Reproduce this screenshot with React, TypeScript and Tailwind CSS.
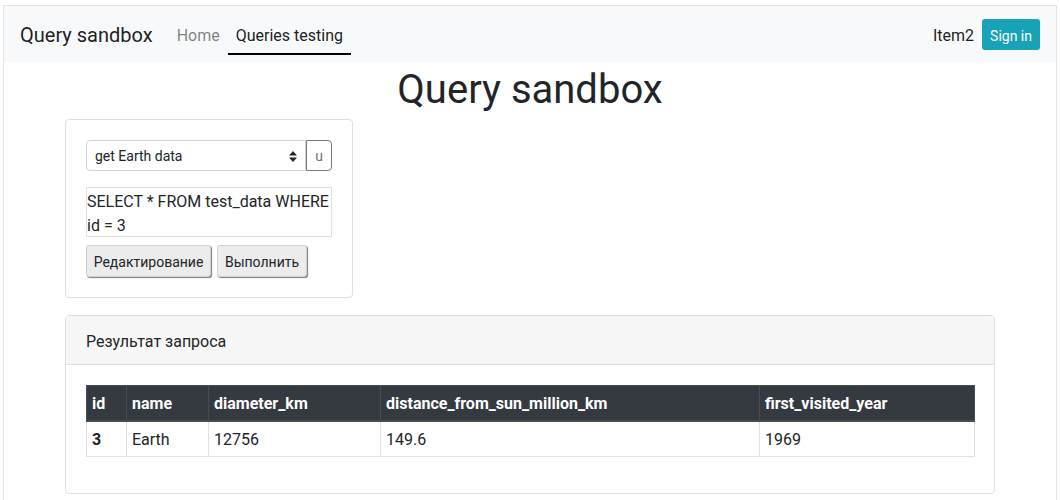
import React from 'react'

const columns = [
  { key: 'id', label: 'id', width: 'w-[40px]' },
  { key: 'name', label: 'name', width: 'w-[82px]' },
  { key: 'diameter_km', label: 'diameter_km', width: 'w-[172px]' },
  { key: 'distance_from_sun_million_km', label: 'distance_from_sun_million_km', width: 'w-[379px]' },
  { key: 'first_visited_year', label: 'first_visited_year', width: 'w-[215px]' },
]

const rows = [
  { id: 3, name: 'Earth', diameter_km: 12756, distance_from_sun_million_km: '149.6', first_visited_year: 1969 },
]

function SortArrows() {
  return (
    <svg width="8" height="11" viewBox="0 0 8 11" fill="#212529">
      <polygon points="4,0 8,4.5 0,4.5" />
      <polygon points="0,6.5 8,6.5 4,11" />
    </svg>
  )
}

export default function App() {
  return (
    <div className="h-[500px] overflow-hidden bg-white font-['Roboto',sans-serif] text-[#212529]">
      <div className="ml-[3px] mt-[5px] h-[495px] w-[1054px] border-x border-t border-[#e3e3e3]">
        {/* Navbar */}
        <header className="flex h-14 items-center justify-between bg-[#f8f9fa] px-4">
          <div className="flex items-center pt-[2px]">
            <span className="mr-4 text-[20px] leading-[30px] text-black/90">Query sandbox</span>
            <nav className="flex items-center">
              <a className="px-2 pb-[6px] pt-2 text-base leading-6 text-black/50">Home</a>
              <a className="border-b-2 border-black px-2 pb-[5px] pt-2 text-base leading-6 text-black/90">
                Queries testing
              </a>
            </nav>
          </div>
          <div className="flex items-center gap-2 pt-[1px]">
            <span className="pt-[2px] text-base text-black/90">Item2</span>
            <button className="h-[31px] rounded-[3px] bg-[#17a2b8] px-2 pt-[2px] text-sm text-white">Sign in</button>
          </div>
        </header>

        <h1 className="pt-1 text-center text-[40px] font-normal leading-[48px]">Query sandbox</h1>

        <div className="mx-auto w-[960px] px-[15px]">
          {/* Query card */}
          <div className="mt-[5px] w-[288px] rounded border border-[#dfdfdf] p-5">
            <div className="flex h-[31px]">
              <div className="flex w-[220px] items-center justify-between rounded-l border border-[#ced4da] pl-2 pr-[8px] pt-[1px] text-sm">
                <span>get Earth data</span>
                <SortArrows />
              </div>
              <div className="flex w-[26px] items-center justify-center rounded-r border border-[#7a7a7a] pt-[1px] text-sm text-[#6c757d]">
                u
              </div>
            </div>
            <div className="mt-4 h-[50px] border border-[#e0e0e0] pt-[2px] text-base leading-6">
              <div>SELECT * FROM test_data WHERE</div>
              <div>id = 3</div>
            </div>
            <div className="mt-[8px] flex gap-[6px]">
              <button className="h-[32px] w-[125px] rounded-[3px] border border-[#d0d0d0] bg-[#ececec] pt-[1px] text-sm shadow-[1px_1px_1px_#7a7a7a]">
                Редактирование
              </button>
              <button className="h-[32px] w-[90px] rounded-[3px] border border-[#d0d0d0] bg-[#ececec] pt-[1px] text-sm shadow-[1px_1px_1px_#7a7a7a]">
                Выполнить
              </button>
            </div>
          </div>

          {/* Result card */}
          <div className="mt-[17px] rounded border border-[#dfdfdf]">
            <div className="border-b border-[#dfdfdf] bg-[#f7f7f7] px-5 pb-[10px] pt-[14px] text-base leading-6">
              Результат запроса
            </div>
            <div className="p-5">
              <table className="mb-4 w-full table-fixed border-collapse text-base leading-6">
                <colgroup>
                  {columns.map((c) => (
                    <col key={c.key} className={c.width} />
                  ))}
                </colgroup>
                <thead>
                  <tr className="bg-[#343a40] text-white">
                    {columns.map((c) => (
                      <th
                        key={c.key}
                        className="border border-b-2 border-[#454d55] px-[5px] pb-[4px] pt-[6px] text-left font-bold"
                      >
                        {c.label}
                      </th>
                    ))}
                  </tr>
                </thead>
                <tbody>
                  {rows.map((r) => (
                    <tr key={r.id}>
                      <th className="border border-[#dee2e6] px-[5px] pb-[4px] pt-[6px] text-left font-bold">{r.id}</th>
                      <td className="border border-[#dee2e6] px-[5px] pb-[4px] pt-[6px]">{r.name}</td>
                      <td className="border border-[#dee2e6] px-[5px] pb-[4px] pt-[6px]">{r.diameter_km}</td>
                      <td className="border border-[#dee2e6] px-[5px] pb-[4px] pt-[6px]">{r.distance_from_sun_million_km}</td>
                      <td className="border border-[#dee2e6] px-[5px] pb-[4px] pt-[6px]">{r.first_visited_year}</td>
                    </tr>
                  ))}
                </tbody>
              </table>
            </div>
          </div>
        </div>
      </div>
    </div>
  )
}
